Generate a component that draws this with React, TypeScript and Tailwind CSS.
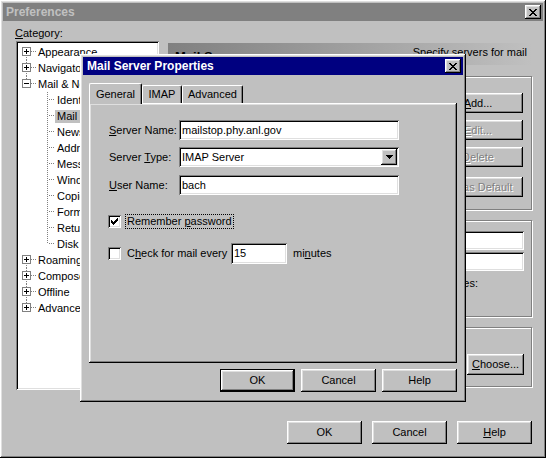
import type { ReactNode } from 'react';

// classic 3d bevels
const RAISED =
  'shadow-[inset_-1px_-1px_0_#000,inset_1px_1px_0_#fff,inset_-2px_-2px_0_#808080,inset_2px_2px_0_#dfdfdf]';
const SUNKEN =
  'shadow-[inset_1px_1px_0_#808080,inset_-1px_-1px_0_#fff,inset_2px_2px_0_#000,inset_-2px_-2px_0_#dfdfdf]';
const GROUP = 'border border-[#808080] shadow-[1px_1px_0_#fff,inset_1px_1px_0_#fff]';

type TreeNode = {
  label: string;
  level: 0 | 1;
  box?: '+' | '-';
  up?: boolean;
  down?: boolean;
  last?: boolean;
  selected?: boolean;
};

const TREE: TreeNode[] = [
  { label: 'Appearance', level: 0, box: '+', down: true },
  { label: 'Navigator', level: 0, box: '+', up: true, down: true },
  { label: 'Mail & Newsgroups', level: 0, box: '-', up: true },
  { label: 'Identity', level: 1 },
  { label: 'Mail Servers', level: 1, selected: true },
  { label: 'Newsgroup Servers', level: 1 },
  { label: 'Addressing', level: 1 },
  { label: 'Messages', level: 1 },
  { label: 'Window Settings', level: 1 },
  { label: 'Copies & Folders', level: 1 },
  { label: 'Formatting', level: 1 },
  { label: 'Return Receipts', level: 1 },
  { label: 'Disk Space', level: 1, last: true },
  { label: 'Roaming User', level: 0, box: '+', down: true },
  { label: 'Composer', level: 0, box: '+', up: true, down: true },
  { label: 'Offline', level: 0, box: '+', up: true, down: true },
  { label: 'Advanced', level: 0, box: '+', up: true },
];

function CloseX() {
  return (
    <svg width="8" height="7" viewBox="0 0 8 7" shapeRendering="crispEdges">
      <path d="M0 0h2v1H0zM6 0h2v1H6zM1 1h2v1H1zM5 1h2v1H5zM2 2h4v1H2zM3 3h2v1H3zM2 4h4v1H2zM1 5h2v1H1zM5 5h2v1H5zM0 6h2v1H0zM6 6h2v1H6z" fill="#000" />
    </svg>
  );
}

function CloseButton() {
  return (
    <div className={`flex h-[14px] w-[16px] shrink-0 items-center justify-center bg-[#c0c0c0] ${RAISED}`}>
      <CloseX />
    </div>
  );
}

function Button({
  children,
  className = '',
  disabled,
  isDefault,
}: {
  children: ReactNode;
  className?: string;
  disabled?: boolean;
  isDefault?: boolean;
}) {
  return (
    <div
      className={`flex shrink-0 items-center justify-center bg-[#c0c0c0] ${RAISED} ${
        isDefault ? 'border border-black' : ''
      } ${disabled ? 'text-[#808080] [text-shadow:1px_1px_0_#fff]' : ''} ${className}`}
    >
      {children}
    </div>
  );
}

function TreeRow({ node }: { node: TreeNode }) {
  const dots = { stroke: '#808080', strokeDasharray: '1 1' };
  return (
    <div className="flex h-[16px] items-center whitespace-nowrap">
      {node.level === 0 ? (
        <svg width="20" height="16" className="shrink-0" shapeRendering="crispEdges">
          {node.up && <line x1="8.5" y1="0" x2="8.5" y2="3" {...dots} />}
          {node.down && <line x1="8.5" y1="13" x2="8.5" y2="16" {...dots} />}
          <line x1="13" y1="7.5" x2="18" y2="7.5" {...dots} />
          <rect x="4.5" y="3.5" width="8" height="8" fill="#fff" stroke="#808080" />
          <line x1="6" y1="7.5" x2="11" y2="7.5" stroke="#000" />
          {node.box === '+' && <line x1="8.5" y1="5" x2="8.5" y2="10" stroke="#000" />}
        </svg>
      ) : (
        <svg width="39" height="16" className="shrink-0" shapeRendering="crispEdges">
          <line x1="29.5" y1="0" x2="29.5" y2={node.last ? 8 : 16} {...dots} />
          <line x1="31" y1="7.5" x2="37" y2="7.5" {...dots} />
        </svg>
      )}
      <span className={node.selected ? '-ml-[2px] bg-[#c0c0c0] px-[2px]' : ''}>{node.label}</span>
    </div>
  );
}

function Field({ children, className = '' }: { children: ReactNode; className?: string }) {
  return (
    <div className={`flex h-[20px] items-center bg-white pl-[3px] ${SUNKEN} ${className}`}>{children}</div>
  );
}

function CheckBox({ checked }: { checked?: boolean }) {
  return (
    <div className={`flex h-[13px] w-[13px] shrink-0 items-center justify-center bg-white ${SUNKEN}`}>
      {checked && (
        <svg width="7" height="7" viewBox="0 0 7 7" shapeRendering="crispEdges">
          <path d="M6 0h1v3H6zM5 1h1v3H5zM4 2h1v3H4zM3 3h1v3H3zM2 4h1v3H2zM1 3h1v3H1zM0 2h1v3H0z" fill="#000" />
        </svg>
      )}
    </div>
  );
}

function MailServerDialog() {
  return (
    <div className={`absolute left-[80px] top-[54px] flex h-[348px] w-[386px] flex-col bg-[#c0c0c0] p-[3px] ${RAISED}`}>
      <div className="flex h-[18px] items-center bg-[#000080] pl-[4px] pr-[2px]">
        <span className="flex-1 text-[12px] font-bold text-white">Mail Server Properties</span>
        <CloseButton />
      </div>

      <div className="flex flex-1 flex-col px-[6px] pt-[8px]">
        <div className="relative z-10 flex h-[20px] items-end">
          <div className="mb-[-1px] flex h-[21px] w-[53px] items-center justify-center rounded-t-[2px] border-l border-r border-t border-l-white border-r-black border-t-white bg-[#c0c0c0] shadow-[inset_-1px_0_0_#808080]">
            General
          </div>
          <div className="flex h-[18px] w-[40px] items-center justify-center rounded-t-[2px] border-l border-r border-t border-l-white border-r-black border-t-white shadow-[inset_-1px_0_0_#808080]">
            IMAP
          </div>
          <div className="flex h-[18px] w-[61px] items-center justify-center rounded-t-[2px] border-l border-r border-t border-l-white border-r-black border-t-white shadow-[inset_-1px_0_0_#808080]">
            Advanced
          </div>
        </div>

        <div className={`h-[260px] pl-[20px] pt-[17px] ${RAISED}`}>
          <div className="flex h-[20px] items-center">
            <span className="w-[70px]">
              <u>S</u>erver Name:
            </span>
            <Field className="w-[220px]">mailstop.phy.anl.gov</Field>
          </div>
          <div className="mt-[7px] flex h-[20px] items-center">
            <span className="w-[70px]">
              Server <u>T</u>ype:
            </span>
            <Field className="w-[220px]">
              <span className="flex-1">IMAP Server</span>
              <div className={`m-[2px] flex h-[16px] w-[16px] items-center justify-center bg-[#c0c0c0] ${RAISED}`}>
                <svg width="7" height="4" viewBox="0 0 7 4" shapeRendering="crispEdges">
                  <path d="M0 0h7v1H0zM1 1h5v1H1zM2 2h3v1H2zM3 3h1v1H3z" fill="#000" />
                </svg>
              </div>
            </Field>
          </div>
          <div className="mt-[8px] flex h-[20px] items-center">
            <span className="w-[70px]">
              <u>U</u>ser Name:
            </span>
            <Field className="w-[220px]">bach</Field>
          </div>

          <div className="-ml-[1px] mt-[18px] flex h-[17px] items-center">
            <CheckBox checked />
            <span className="ml-[4px] border border-dotted border-black px-[1px] leading-[13px]">
              Remember <u>p</u>assword
            </span>
          </div>

          <div className="-ml-[1px] mt-[13px] flex h-[21px] items-center">
            <CheckBox />
            <span className="ml-[6px] w-[104px]">
              C<u>h</u>eck for mail every
            </span>
            <Field className="h-[21px] w-[56px]">15</Field>
            <span className="ml-[6px] -mt-[1px]">
              mi<u>n</u>utes
            </span>
          </div>
        </div>

        <div className="mt-[6px] flex justify-end gap-[6px]">
          <Button isDefault className="h-[23px] w-[75px]">
            OK
          </Button>
          <Button className="h-[23px] w-[75px]">Cancel</Button>
          <Button className="h-[23px] w-[75px]">Help</Button>
        </div>
      </div>
    </div>
  );
}

export default function App() {
  return (
    <div className="relative h-[458px] w-[546px] overflow-hidden bg-[#c0c0c0] font-['Liberation_Sans',Arial,sans-serif] text-[11px] leading-[13px] text-black">
      <div className={`flex h-full flex-col p-[3px] ${RAISED}`}>
        <div className="flex h-[18px] items-center bg-[#808080] pl-[3px] pr-[2px]">
          <span className="flex-1 text-[12px] font-bold text-[#c0c0c0]">Preferences</span>
          <CloseButton />
        </div>

        <div className="flex flex-1 flex-col pl-[13px] pr-[11px]">
          <div className="-ml-[1px] mt-[6px] h-[13px]">
            <u>C</u>ategory:
          </div>

          <div className="mt-[1px] flex h-[349px] gap-[9px]">
            <div className={`w-[143px] shrink-0 overflow-hidden bg-white pl-[2px] pt-[3px] ${SUNKEN}`}>
              {TREE.map((node) => (
                <TreeRow key={node.label} node={node} />
              ))}
            </div>

            <div className="flex flex-1 flex-col">
              <div className="mt-[2px] flex h-[22px] justify-between bg-linear-to-r from-[#808080] to-[#c0c0c0]">
                <span className="pl-[7px] pt-[7px] text-[13px] font-bold">Mail Servers</span>
                <span className="pr-[5px] pt-[3px]">Specify servers for mail</span>
              </div>

              <div className={`mt-[11px] flex h-[134px] flex-col items-end pr-[8px] pt-[16px] ${GROUP}`}>
                <Button className="h-[20px] w-[90px]">
                  <span>
                    <u>A</u>dd...
                  </span>
                </Button>
                <Button disabled className="mt-[7px] h-[20px] w-[90px]">
                  <span>
                    <u>E</u>dit...
                  </span>
                </Button>
                <Button disabled className="mt-[7px] h-[20px] w-[90px]">
                  <span>
                    <u>D</u>elete
                  </span>
                </Button>
                <Button disabled className="mt-[10px] h-[20px] w-[90px]">
                  Set as Default
                </Button>
              </div>

              <div className={`mt-[10px] flex h-[97px] flex-col items-end pr-[7px] pt-[10px] ${GROUP}`}>
                <div className={`h-[19px] w-[150px] bg-white ${SUNKEN}`} />
                <div className={`mt-[2px] h-[19px] w-[150px] bg-white ${SUNKEN}`} />
                <div className="mt-[6px] self-stretch pr-[46px] text-right">Check for new messages:</div>
              </div>

              <div className={`mt-[10px] flex h-[60px] flex-col items-end pr-[7px] pt-[26px] ${GROUP}`}>
                <Button className="h-[21px] w-[57px]">
                  <span>
                    <u>C</u>hoose...
                  </span>
                </Button>
              </div>
            </div>
          </div>

          <div className="mt-[31px] flex justify-end gap-[10px]">
            <Button className="h-[23px] w-[75px]">OK</Button>
            <Button className="h-[23px] w-[75px]">Cancel</Button>
            <Button className="h-[23px] w-[75px]">
              <span>
                <u>H</u>elp
              </span>
            </Button>
          </div>
        </div>
      </div>

      <MailServerDialog />
    </div>
  );
}
